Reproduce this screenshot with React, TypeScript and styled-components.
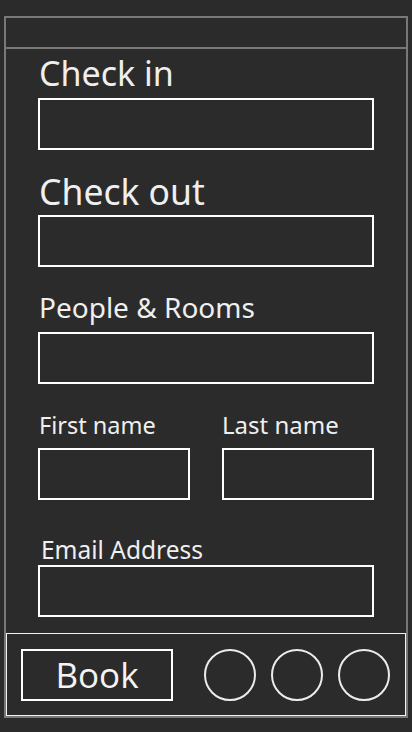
import React from "react";
import styled, { createGlobalStyle } from "styled-components";

const Global = createGlobalStyle`
  html, body {
    margin: 0;
    padding: 0;
    background: #2b2b2b;
    font-family: "Noto Sans", "Open Sans", sans-serif;
    color: #efefef;
  }
  * { box-sizing: border-box; }
`;

const Page = styled.div`
  width: 412px;
  height: 732px;
  padding: 16px 4px 14px;
`;

const Frame = styled.div`
  height: 702px;
  border: 2px solid #787878;
  display: flex;
  flex-direction: column;
`;

const Header = styled.div`
  height: 31px;
  flex: none;
  border-bottom: 2px solid #787878;
`;

const Content = styled.div`
  flex: 1;
  padding: 1px 32px 0;
  display: flex;
  flex-direction: column;
`;

const Field = styled.div<{ $top: number }>`
  display: flex;
  flex-direction: column;
  margin-top: ${(p) => p.$top}px;
  min-width: 0;
`;

const Label = styled.label<{ $size: number; $gap: number; $indent?: number }>`
  font-size: ${(p) => p.$size}px;
  line-height: normal;
  margin-bottom: ${(p) => p.$gap}px;
  padding-left: ${(p) => p.$indent ?? 1}px;
  white-space: nowrap;
`;

const Input = styled.div`
  height: 52px;
  border: 2px solid #ffffff;
`;

const Row = styled.div`
  display: grid;
  grid-template-columns: 1fr 1fr;
  column-gap: 32px;
  align-items: end;
`;

const Footer = styled.div`
  height: 83px;
  flex: none;
  border: 1px solid #f2f2f2;
  display: flex;
  align-items: center;
  padding: 0 15px 0 14px;
`;

const BookButton = styled.div`
  width: 153px;
  height: 52px;
  border: 2px solid #ffffff;
  display: flex;
  align-items: center;
  justify-content: center;
  font-family: "Open Sans", sans-serif;
  font-size: 35px;
  color: #f4f4f4;
  margin-right: 31px;
`;

const Dots = styled.div`
  display: flex;
  gap: 15px;
`;

const Dot = styled.div`
  width: 52px;
  height: 52px;
  border-radius: 50%;
  border: 2px solid #ececec;
`;

export default function App() {
  return (
    <>
      <Global />
      <Page>
        <Frame>
          <Header />
          <Content>
            <Field $top={0}>
              <Label $size={34} $gap={2}>Check in</Label>
              <Input />
            </Field>
            <Field $top={16.5}>
              <Label $size={35.5} $gap={0}>Check out</Label>
              <Input />
            </Field>
            <Field $top={21}>
              <Label $size={28} $gap={6}>People &amp; Rooms</Label>
              <Input />
            </Field>
            <Row>
              <Field $top={25}>
                <Label $size={23.5} $gap={7}>First name</Label>
                <Input />
              </Field>
              <Field $top={24.5}>
                <Label $size={24} $gap={6.8} $indent={0}>Last name</Label>
                <Input />
              </Field>
            </Row>
            <Field $top={33}>
              <Label $size={24.5} $gap={-1} $indent={3}>Email Address</Label>
              <Input />
            </Field>
          </Content>
          <Footer>
            <BookButton>Book</BookButton>
            <Dots>
              <Dot />
              <Dot />
              <Dot />
            </Dots>
          </Footer>
        </Frame>
      </Page>
    </>
  );
}
